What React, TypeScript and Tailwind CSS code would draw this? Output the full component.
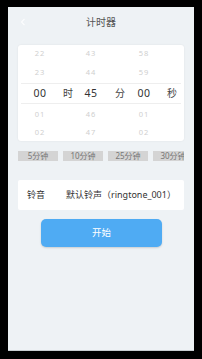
import React from "react";

const font = { fontFamily: '"Noto Sans", "Noto Sans CJK SC", sans-serif' };

const rows: { h: string; cells: string[]; sel?: boolean }[] = [
  { h: "h-[17px]", cells: ["22", "", "43", "", "58", ""] },
  { h: "h-[21px]", cells: ["23", "", "44", "", "59", ""] },
  { h: "h-[21px]", cells: ["00", "时", "45", "分", "00", "秒"], sel: true },
  { h: "h-[21px]", cells: ["01", "", "46", "", "01", ""] },
  { h: "h-[16px]", cells: ["02", "", "47", "", "02", ""] },
];

const margins = ["ml-[12px]", "ml-[8px]", "ml-[3px]", "ml-[9px]", "ml-[4px]", "ml-[8px]"];

export default function App() {
  return (
    <div className="w-[202px] h-[359px] bg-black pt-[7px] pl-[8px]" style={font}>
      <div className="w-[186px] h-[344px] bg-[#eef2f5] border-b border-[#c9cdd1] flex flex-col">
        {/* header */}
        <div className="h-[38px] relative flex items-start justify-center pt-[7px]">
          <svg className="absolute left-[12px] top-[11px]" width="6" height="8" viewBox="0 0 6 8">
            <path d="M4.5 0.8 L1.5 4 L4.5 7.2" stroke="#ffffff" strokeWidth="1.2" fill="none" opacity="0.8" />
          </svg>
          <span className="text-[10px] leading-[16px] text-[#555]">计时器</span>
        </div>

        {/* picker */}
        <div className="mx-[10px] h-[96px] bg-white rounded-[3px] shadow-[0_0_2px_rgba(0,0,0,0.08)] flex flex-col overflow-hidden">
          {rows.map((r, i) => (
            <div
              key={i}
              className={`${r.h} flex items-center ${r.sel ? "border-y border-[#eeeeee] mx-[3px]" : ""}`}
            >
              {r.cells.map((c, j) => (
                <div
                  key={j}
                  className={`w-[20px] shrink-0 flex justify-center whitespace-nowrap ${r.sel ? (j === 0 ? "ml-[9px]" : margins[j]) : margins[j]} ${
                    r.sel
                      ? j % 2 === 0
                        ? "text-[10.5px] tracking-[0.5px] text-[#333]"
                        : "text-[10px] text-[#444]"
                      : "text-[7.5px] tracking-[1px] text-[#cfcfcf]"
                  }`}
                >
                  {c}
                </div>
              ))}
            </div>
          ))}
        </div>

        {/* chips */}
        <div className="mx-[10px] mt-[10px] h-[10px] flex gap-[5px] overflow-hidden">
          {["5分钟", "10分钟", "25分钟", "30分钟"].map((t) => (
            <div
              key={t}
              className="w-[40px] shrink-0 h-[10px] bg-[#d4d4d4] text-[#777] text-[8px] leading-[10px] flex items-center justify-center whitespace-nowrap"
            >
              {t}
            </div>
          ))}
        </div>

        {/* ringtone */}
        <div className="mx-[10px] mt-[19px] h-[30px] bg-white rounded-[2px] flex items-center pl-[9px] text-[9px] text-[#333] whitespace-nowrap">
          <span className="w-[39px]">铃音</span>
          <span>默认铃声（ringtone_001）</span>
        </div>

        {/* start button */}
        <div className="mt-[9px] flex">
          <button className="ml-[33px] w-[121px] h-[28px] bg-[#4fabf3] rounded-[5px] shadow-[0_1px_2px_rgba(0,0,0,0.15)] text-white text-[9.5px] flex items-center justify-center">
            开始
          </button>
        </div>
      </div>
    </div>
  );
}
